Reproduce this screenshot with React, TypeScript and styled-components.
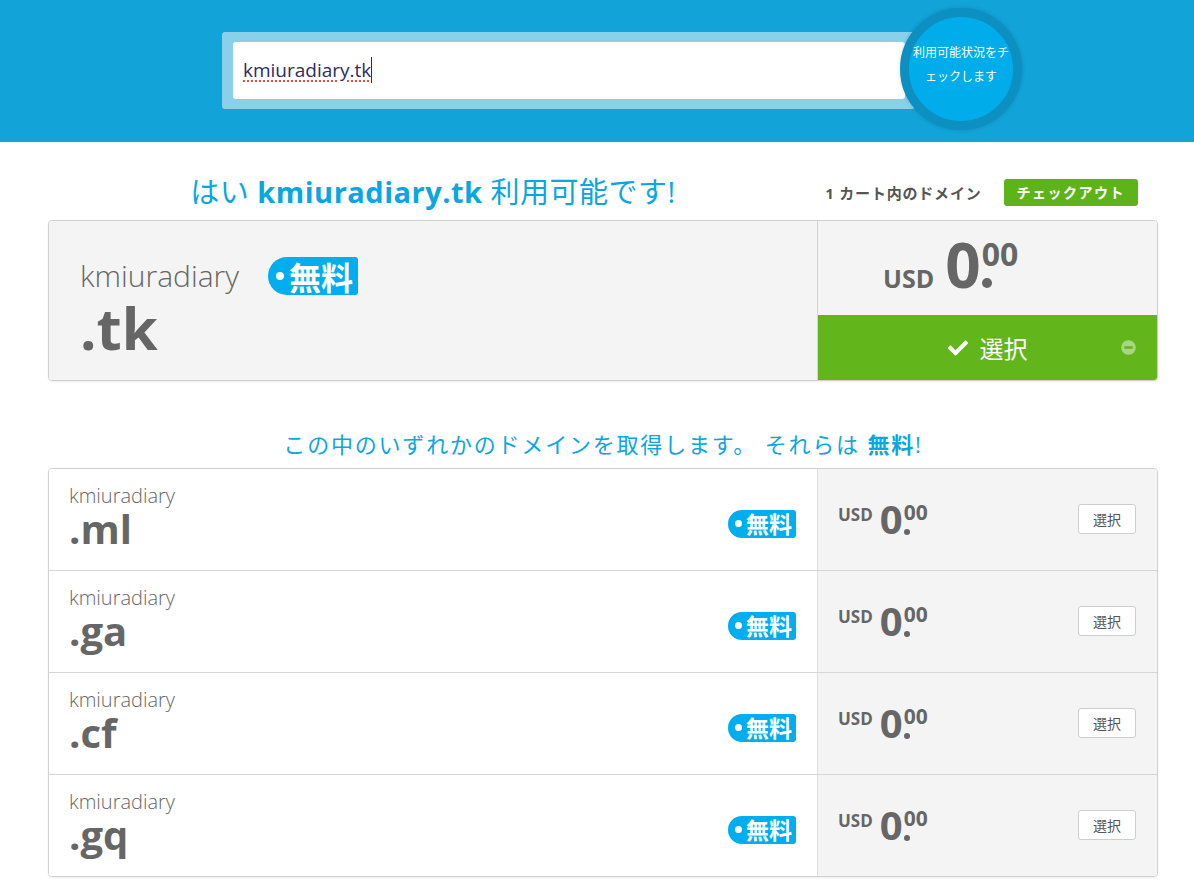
import React from 'react';
import styled, { createGlobalStyle } from 'styled-components';
import { FaCheck, FaMinusCircle } from 'react-icons/fa';

const GlobalStyle = createGlobalStyle`
    * {
        box-sizing: border-box;
    }
    body {
        margin: 0;
        background: #fff;
        font-family: "Open Sans", "Noto Sans CJK JP", sans-serif;
        color: #666;
    }
`;

const Header = styled.header`
    height: 142px;
    background: #12a3d8;
    display: flex;
    align-items: center;
    padding-left: 222px;
`;

const SearchWrap = styled.div`
    width: 693px;
    margin-top: -2px;
    padding: 10px 10px 10px 11px;
    background: #89d0ea;
    border-radius: 3px;
`;

const SearchInput = styled.div`
    height: 57px;
    background: #fff;
    border-radius: 3px;
    display: flex;
    align-items: center;
    padding-left: 10px;
    font-size: 19px;
    color: #2d2b64;
`;

const Typed = styled.span`
    text-decoration: underline dotted #e0473c;
    text-underline-offset: 4px;
    border-right: 1px solid #2d2b64;
    line-height: 26px;
`;

const CheckButton = styled.button`
    position: relative;
    width: 122px;
    height: 122px;
    margin-left: -15px;
    margin-top: -4px;
    border-radius: 50%;
    border: 9px solid #0c90c1;
    background: #00adea;
    color: #fff;
    font-family: "Noto Sans CJK JP", sans-serif;
    font-size: 12px;
    line-height: 24px;
    padding: 0 4px 10px;
    box-shadow: 0 0 4px rgba(0, 0, 0, 0.15);
`;

const Main = styled.main`
    width: 1110px;
    margin-left: 48px;
    padding-bottom: 12px;
`;

const TitleRow = styled.div`
    display: flex;
    height: 78px;
    padding-top: 30px;
    padding-bottom: 8px;
`;

const Title = styled.h1`
    width: 770px;
    margin: 0;
    text-align: center;
    font-size: 29px;
    font-weight: 400;
    letter-spacing: 0.5px;
    line-height: 40px;
    color: #0aa6e1;

    b {
        font-weight: 700;
    }
`;

const CartInfo = styled.div`
    flex: 1;
    display: flex;
    align-items: center;
    justify-content: flex-end;
    gap: 22px;
    padding-right: 20px;
    font-size: 15px;
    font-weight: 700;
    letter-spacing: 0.8px;
    color: #555;
`;

const CheckoutButton = styled.button`
    height: 27px;
    padding: 0 13px;
    border: none;
    border-radius: 3px;
    background: #5db41a;
    color: #fff;
    font-family: "Noto Sans CJK JP", sans-serif;
    font-size: 14px;
    font-weight: 700;
    letter-spacing: 1.5px;
`;

const Card = styled.div`
    display: flex;
    height: 161px;
    border: 1px solid #cfcfcf;
    border-radius: 4px;
    overflow: hidden;
    box-shadow: 0 1px 2px rgba(0, 0, 0, 0.08);
`;

const CardMain = styled.div`
    width: 769px;
    background: #f4f4f4;
    border-right: 1px solid #d4d4d4;
    padding: 36px 31px 0;
`;

const NameRow = styled.div`
    display: flex;
    align-items: center;
    height: 38px;
    gap: 29px;
`;

const Name = styled.div<{ $size: number }>`
    font-size: ${p => p.$size}px;
    font-weight: 300;
    color: #666;
    line-height: 1.15;
`;

const Tld = styled.div<{ $size: number }>`
    font-size: ${p => p.$size}px;
    font-weight: 700;
    color: #666;
    line-height: 1;
    margin-top: ${p => (p.$size > 50 ? 4 : 2)}px;
`;

const FreeBadge = styled.span<{ $big?: boolean }>`
    display: inline-flex;
    align-items: center;
    gap: ${p => (p.$big ? 5 : 4)}px;
    height: ${p => (p.$big ? 38 : 28)}px;
    margin-top: ${p => (p.$big ? 0 : 8)}px;
    padding: ${p => (p.$big ? '0 5px 0 8px' : '0 4px 0 7px')};
    background: #00aeef;
    color: #fff;
    font-family: "Noto Sans CJK JP", sans-serif;
    font-size: ${p => (p.$big ? 32 : 23)}px;
    font-weight: 700;
    line-height: 1;
    border-radius: ${p => (p.$big ? '19px 3px 3px 19px' : '14px 3px 3px 14px')};

    &::before {
        content: '';
        width: ${p => (p.$big ? 8 : 7)}px;
        height: ${p => (p.$big ? 8 : 7)}px;
        border-radius: 50%;
        background: #fff;
    }
`;

const CardSide = styled.div`
    flex: 1;
    display: flex;
    flex-direction: column;
`;

const PriceBox = styled.div`
    flex: 1;
    background: #f4f4f4;
    display: flex;
    align-items: baseline;
    gap: 11px;
    padding: 12px 0 0 65px;
`;

const Currency = styled.span<{ $size: number }>`
    font-size: ${p => p.$size}px;
    font-weight: 700;
    color: #666;
    line-height: 1;
    margin-top: ${p => (p.$size < 20 ? 7 : 0)}px;
`;

const Amount = styled.span<{ $size: number }>`
    display: inline-flex;
    align-items: stretch;
    font-size: ${p => p.$size}px;
    font-weight: 700;
    color: #666;
    line-height: 1;
`;

const Fraction = styled.span<{ $size: number }>`
    display: inline-flex;
    flex-direction: column;
    justify-content: space-between;
    align-items: flex-start;
    margin-left: ${p => Math.round(p.$size * 0.02)}px;
`;

const Cents = styled.span<{ $size: number }>`
    font-size: ${p => Math.round(p.$size * 0.52)}px;
    margin-top: ${p => Math.round(p.$size * 0.084)}px;
    line-height: 1;
`;

const Dot = styled.span<{ $size: number }>`
    width: ${p => Math.round(p.$size * 0.155)}px;
    height: ${p => Math.round(p.$size * 0.155)}px;
    margin-bottom: ${p => Math.round(p.$size * 0.112)}px;
    border-radius: 50%;
    background: #666;
`;

const SelectedBar = styled.div`
    height: 65px;
    background: #62b51a;
    display: grid;
    grid-template-columns: 1fr auto 1fr;
    align-items: center;
    color: #fff;
`;

const SelectedLabel = styled.div`
    display: flex;
    align-items: center;
    gap: 12px;
    font-family: "Noto Sans CJK JP", sans-serif;
    font-size: 24px;
`;

const RemoveIcon = styled(FaMinusCircle)`
    justify-self: end;
    margin-right: 21px;
    color: rgba(255, 255, 255, 0.45);
`;

const SectionTitle = styled.h2`
    margin: 48px 0 9px;
    text-align: center;
    font-size: 22px;
    font-weight: 400;
    letter-spacing: 1.8px;
    line-height: 30px;
    color: #0aa6e1;

    b {
        font-weight: 700;
    }
`;

const List = styled.div`
    border: 1px solid #d0d0d0;
    border-radius: 4px;
    overflow: hidden;
    box-shadow: 0 1px 2px rgba(0, 0, 0, 0.08);
`;

const Row = styled.div`
    display: flex;
    height: 102px;
    border-bottom: 1px solid #d6d6d6;

    &:last-child {
        height: 101px;
        border-bottom: none;
    }
`;

const RowMain = styled.div`
    width: 769px;
    background: #fff;
    display: flex;
    justify-content: space-between;
    align-items: center;
    padding: 0 21px 0 20px;
    border-right: 1px solid #dcdcdc;
`;

const RowName = styled.div`
    align-self: flex-start;
    padding-top: 15px;
`;

const RowSide = styled.div`
    flex: 1;
    background: #f4f4f4;
    display: flex;
    align-items: flex-start;
    justify-content: space-between;
    padding: 30px 21px 0 20px;
`;

const RowPrice = styled.div`
    display: flex;
    align-items: flex-start;
    gap: 7px;
`;

const SelectButton = styled.button`
    margin-top: 5px;
    width: 58px;
    height: 30px;
    border: 1px solid #cdcdcd;
    border-radius: 3px;
    background: #fff;
    color: #555;
    font-family: "Noto Sans CJK JP", sans-serif;
    font-size: 14px;
`;

const Price = ({ size, currency }: { size: number; currency: number }) => (
    <>
        <Currency $size={currency}>USD</Currency>
        <Amount $size={size}>
            0
            <Fraction $size={size}>
                <Cents $size={size}>00</Cents>
                <Dot $size={size} />
            </Fraction>
        </Amount>
    </>
);

const others = ['.ml', '.ga', '.cf', '.gq'];

export default function App() {
    return (
        <>
            <GlobalStyle />
            <Header>
                <SearchWrap>
                    <SearchInput>
                        <Typed>kmiuradiary.tk</Typed>
                    </SearchInput>
                </SearchWrap>
                <CheckButton>利用可能状況をチェックします</CheckButton>
            </Header>

            <Main>
                <TitleRow>
                    <Title>
                        はい <b>kmiuradiary.tk</b> 利用可能です!
                    </Title>
                    <CartInfo>
                        <span>1 カート内のドメイン</span>
                        <CheckoutButton>チェックアウト</CheckoutButton>
                    </CartInfo>
                </TitleRow>

                <Card>
                    <CardMain>
                        <NameRow>
                            <Name $size={30}>kmiuradiary</Name>
                            <FreeBadge $big>無料</FreeBadge>
                        </NameRow>
                        <Tld $size={58}>.tk</Tld>
                    </CardMain>
                    <CardSide>
                        <PriceBox>
                            <Price size={62} currency={25} />
                        </PriceBox>
                        <SelectedBar>
                            <span />
                            <SelectedLabel>
                                <FaCheck size={20} />
                                選択
                            </SelectedLabel>
                            <RemoveIcon size={15} />
                        </SelectedBar>
                    </CardSide>
                </Card>

                <SectionTitle>
                    この中のいずれかのドメインを取得します。 それらは <b>無料</b>!
                </SectionTitle>

                <List>
                    {others.map(tld => (
                        <Row key={tld}>
                            <RowMain>
                                <RowName>
                                    <Name $size={20}>kmiuradiary</Name>
                                    <Tld $size={40}>{tld}</Tld>
                                </RowName>
                                <FreeBadge>無料</FreeBadge>
                            </RowMain>
                            <RowSide>
                                <RowPrice>
                                    <Price size={40} currency={17} />
                                </RowPrice>
                                <SelectButton>選択</SelectButton>
                            </RowSide>
                        </Row>
                    ))}
                </List>
            </Main>
        </>
    );
}
